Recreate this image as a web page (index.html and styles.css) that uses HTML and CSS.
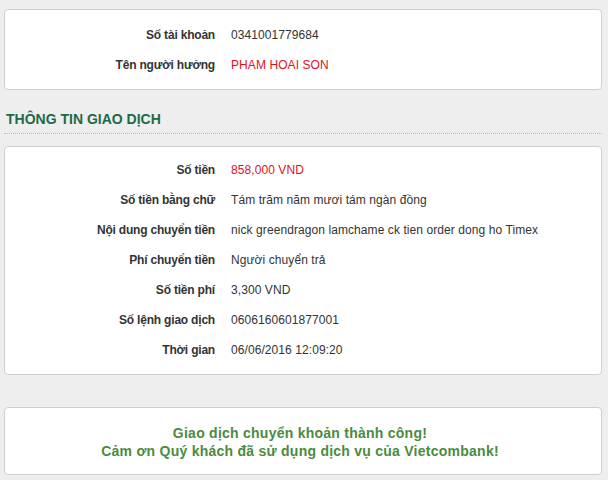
FILE: index.html
```html
<!DOCTYPE html>
<html lang="vi">
<head>
<meta charset="utf-8">
<title>Vietcombank</title>
<link rel="stylesheet" href="styles.css">
</head>
<body>
<div class="page">
  <div class="card info card-first">
    <div class="row"><div class="label">Số tài khoản</div><div class="value">0341001779684</div></div>
    <div class="row"><div class="label">Tên người hưởng</div><div class="value red">PHAM HOAI SON</div></div>
  </div>

  <h2 class="section-title">THÔNG TIN GIAO DỊCH</h2>

  <div class="card info card-second">
    <div class="row"><div class="label">Số tiền</div><div class="value red">858,000 VND</div></div>
    <div class="row"><div class="label">Số tiền bằng chữ</div><div class="value">Tám trăm năm mươi tám ngàn đồng</div></div>
    <div class="row"><div class="label">Nội dung chuyển tiền</div><div class="value">nick greendragon lamchame ck tien order dong ho Timex</div></div>
    <div class="row"><div class="label">Phí chuyển tiền</div><div class="value">Người chuyển trả</div></div>
    <div class="row"><div class="label">Số tiền phí</div><div class="value">3,300 VND</div></div>
    <div class="row"><div class="label">Số lệnh giao dịch</div><div class="value">0606160601877001</div></div>
    <div class="row"><div class="label">Thời gian</div><div class="value">06/06/2016 12:09:20</div></div>
  </div>

  <div class="card message">
    <p>Giao dịch chuyển khoản thành công!</p>
    <p>Cảm ơn Quý khách đã sử dụng dịch vụ của Vietcombank!</p>
  </div>
</div>
</body>
</html>
```
FILE: styles.css
```css
html, body {
  margin: 0;
  padding: 0;
  background: #eeeeee;
}
body {
  font-family: "Liberation Sans", Arial, sans-serif;
  font-size: 12px;
  color: #333333;
}
.page {
  padding: 9px 6px 0 4px;
}
.card {
  background: #ffffff;
  border: 1px solid #cfcfcf;
  border-radius: 4px;
}
.card-first {
  padding: 10px 0 9px;
}
.card-second {
  padding: 8px 0 9px;
}
.row {
  display: grid;
  grid-template-columns: 210px 1fr;
  column-gap: 16px;
  height: 30px;
  align-items: center;
}
.label {
  text-align: right;
  font-weight: bold;
  color: #333333;
  letter-spacing: -0.2px;
}
.value {
  color: #333333;
  letter-spacing: 0.08px;
}
.red {
  color: #e0121b;
}
.section-title {
  margin: 19px 0 12px;
  padding: 0 0 4px 2px;
  font-size: 14px;
  line-height: 20px;
  font-weight: bold;
  color: #1d6a47;
  border-bottom: 1px dotted #b8b8b8;
}
.message {
  margin-top: 32px;
  padding: 16px 6px 14px 0;
  text-align: center;
}
.message p {
  margin: 0;
  font-size: 14px;
  line-height: 18px;
  font-weight: bold;
  color: #4a8b3c;
  letter-spacing: 0.25px;
}
```
